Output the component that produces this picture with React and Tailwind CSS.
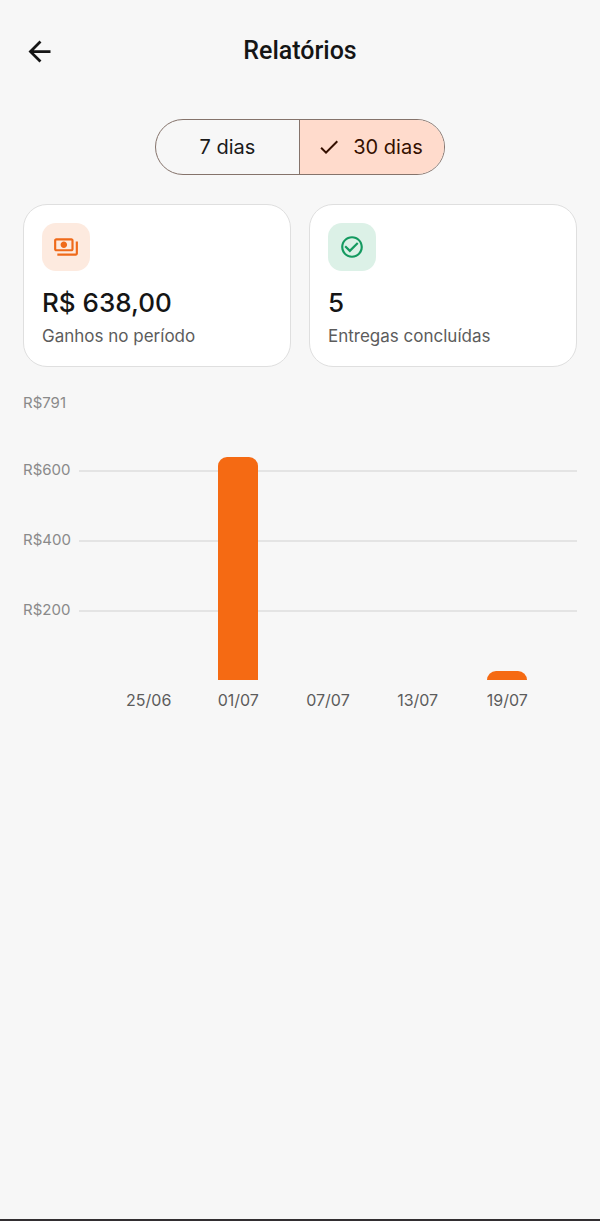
import { useState } from 'react';
import { MdArrowBack, MdCheck, MdCheckCircleOutline, MdOutlinePayments } from 'react-icons/md';

const periods = [
  { id: '7', label: '7 dias' },
  { id: '30', label: '30 dias' },
];

const earnings = [
  { day: '25/06', value: 0 },
  { day: '01/07', value: 638 },
  { day: '07/07', value: 0 },
  { day: '13/07', value: 0 },
  { day: '19/07', value: 26 },
];

const maxValue = 791;

// each band goes from its tick down to the next one
const bands = [
  { tick: 791, size: 191, line: false },
  { tick: 600, size: 200, line: true },
  { tick: 400, size: 200, line: true },
  { tick: 200, size: 200, line: true },
];

function SummaryCard({ icon, iconClass, value, label }) {
  return (
    <div className="rounded-3xl border border-[#dfdfdf] bg-white p-[18px]">
      <div className={`flex h-12 w-12 items-center justify-center rounded-[14px] ${iconClass}`}>{icon}</div>
      <p className="mt-4 text-[26px] leading-8 font-medium text-[#151515]">{value}</p>
      <p className="mt-[5px] text-[17px] leading-6 text-[#5c5c5c]">{label}</p>
    </div>
  );
}

function EarningsChart() {
  return (
    <div className="mt-9">
      <div className="relative flex h-[277px] flex-col">
        {bands.map((band) => (
          <div key={band.tick} className="flex basis-0 items-start" style={{ flexGrow: band.size }}>
            <span className="w-14 -translate-y-1/2 text-[15px] leading-5 text-[#8a8a8a]">R${band.tick}</span>
            {band.line && <div className="flex-1 border-t-2 border-[#e4e4e4]" />}
          </div>
        ))}

        {/* Bars */}
        <div className="absolute inset-y-0 right-0 left-14 flex items-end justify-evenly">
          {earnings.map((item) => (
            <div
              key={item.day}
              className="w-10 rounded-t-[9px] bg-[#f56a13]"
              style={{ height: `${(item.value / maxValue) * 100}%` }}
            />
          ))}
        </div>
      </div>

      <div className="mt-[10px] ml-14 flex justify-evenly">
        {earnings.map((item) => (
          <span key={item.day} className="flex w-10 justify-center text-[16px] leading-5 text-[#5c5c5c]">
            {item.day}
          </span>
        ))}
      </div>
    </div>
  );
}

function App() {
  const [period, setPeriod] = useState('30');

  return (
    <div className="min-h-screen border-b-2 border-[#322e31] bg-[#f7f7f7] font-['Inter',sans-serif]">
      <header className="grid grid-cols-[1fr_auto_1fr] items-center px-[23px] pt-[31px]">
        <button type="button" aria-label="Voltar" className="w-8 text-[#151515]">
          <MdArrowBack size={33} />
        </button>
        <h1 className="font-['Roboto',sans-serif] text-[25px] leading-10 font-medium text-[#151515]">Relatórios</h1>
      </header>

      <main className="px-[23px]">
        {/* Period selector */}
        <div className="mt-12 flex justify-center">
          <div className="grid h-14 w-[290px] grid-cols-2 divide-x divide-[#85736b] overflow-hidden rounded-full border border-[#85736b]">
            {periods.map((p) => (
              <button
                key={p.id}
                type="button"
                aria-pressed={period === p.id}
                onClick={() => setPeriod(p.id)}
                className={`flex items-center justify-center gap-3 text-[20px] ${
                  period === p.id ? 'bg-[#ffdbcc] pr-1 text-[#351000]' : 'text-[#1a1a1a]'
                }`}
              >
                {period === p.id && <MdCheck size={24} />}
                {p.label}
              </button>
            ))}
          </div>
        </div>

        <div className="mt-[29px] grid grid-cols-2 gap-[18px]">
          <SummaryCard
            icon={<MdOutlinePayments size={26} />}
            iconClass="bg-[#fdeadf] text-[#ef6a1a]"
            value="R$ 638,00"
            label="Ganhos no período"
          />
          <SummaryCard
            icon={<MdCheckCircleOutline size={26} />}
            iconClass="bg-[#dcf1e7] text-[#149a60]"
            value="5"
            label="Entregas concluídas"
          />
        </div>

        <EarningsChart />
      </main>
    </div>
  );
}

export default App;
